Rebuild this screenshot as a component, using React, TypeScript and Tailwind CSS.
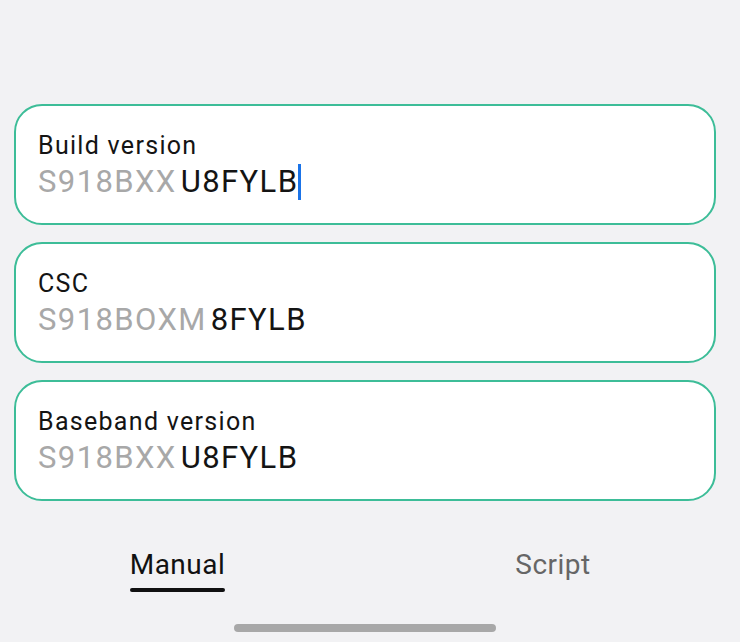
const fields = [
  { label: 'Build version', prefix: 'S918BXX', value: 'U8FYLB', cursor: true },
  { label: 'CSC', prefix: 'S918BOXM', value: '8FYLB', cursor: false },
  { label: 'Baseband version', prefix: 'S918BXX', value: 'U8FYLB', cursor: false },
];

export default function App() {
  return (
    <div
      className="w-[740px] h-[642px] bg-[#f2f2f4] flex flex-col overflow-hidden"
      style={{ fontFamily: 'Roboto, "Noto Sans", sans-serif' }}
    >
      <div className="pt-[104px] pl-[14px] flex flex-col gap-[17px]">
        {fields.map((f) => (
          <div
            key={f.label}
            className="w-[702px] h-[121px] rounded-[28px] border-2 border-[#3dbd98] bg-white pl-[22px] pt-[24px]"
          >
            <div className="text-[25px] leading-[32px] tracking-[1.3px] text-[#141414]">{f.label}</div>
            <div className="flex items-center text-[31px] leading-[40px] tracking-[1.4px]">
              <span className="text-[#a8a8a8]">{f.prefix}</span>
              <span className="ml-[4px] text-[#141414]">{f.value}</span>
              {f.cursor && <span className="w-[3px] h-[36px] bg-[#1a73e8]" />}
            </div>
          </div>
        ))}
      </div>

      <div className="flex mt-[48px]">
        <div className="w-[355px] shrink-0 flex flex-col items-center">
          <span className="text-[28px] leading-[32px] tracking-[0.5px] text-[#111]">Manual</span>
          <span className="mt-[7px] w-[95px] h-[4px] rounded-full bg-[#111]" />
        </div>
        <div className="w-[396px] shrink-0 flex flex-col items-center">
          <span className="text-[28px] leading-[32px] tracking-[0.5px] text-[#666]">Script</span>
        </div>
      </div>

      <div className="flex justify-center pr-[10px] mt-[32px]">
        <span className="w-[262px] h-[8px] rounded-full bg-[#a8a8a8]" />
      </div>
    </div>
  );
}
